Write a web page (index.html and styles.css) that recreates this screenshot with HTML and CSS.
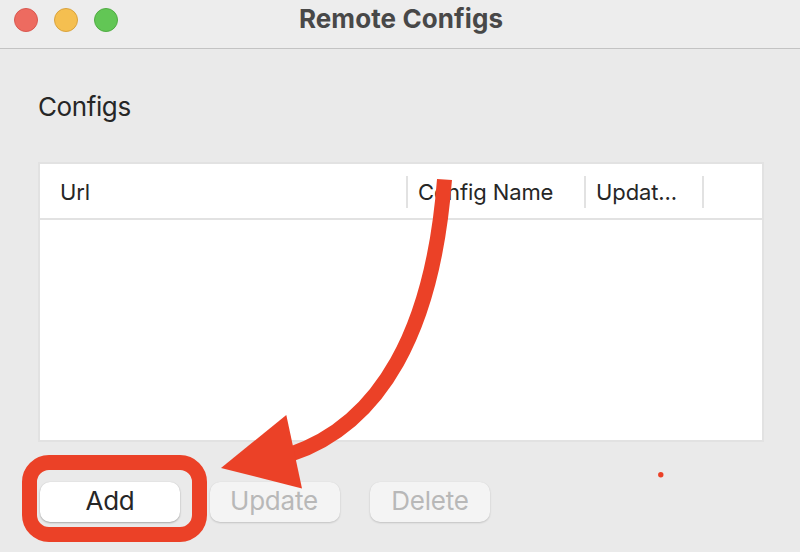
FILE: index.html
```html
<!DOCTYPE html>
<html lang="en">
<head>
<meta charset="utf-8">
<title>Remote Configs</title>
<link rel="stylesheet" href="styles.css">
</head>
<body>
<main class="window">
  <header class="titlebar">
    <div class="lights"><i class="light close"></i><i class="light minimize"></i><i class="light zoom"></i></div>
    <h1><span>Remote Configs</span></h1>
  </header>
  <section class="content">
    <h2><span>Configs</span></h2>
    <div class="table">
      <div class="thead">
        <div class="cell url"><span>Url</span></div>
        <div class="cell name"><span>Config Name</span></div>
        <div class="cell updated"><span>Updat...</span></div>
      </div>
    </div>
    <div class="buttons">
      <button class="add"><span>Add</span></button>
      <button class="update" disabled><span>Update</span></button>
      <button class="delete" disabled><span>Delete</span></button>
    </div>
  </section>
  <svg class="annotation" width="800" height="552" viewBox="0 0 800 552">
    <rect x="29.5" y="462.5" width="170" height="72" rx="19.5" fill="none" stroke="#eb4127" stroke-width="15"/>
    <path d="M444.5 179.5C433 330 381 424 290 454.500" fill="none" stroke="#eb4127" stroke-width="15"/>
    <path d="M221 468L286.300 415L302 488.500Z" fill="#eb4127"/>
    <circle cx="660.800" cy="474.700" r="2.700" fill="#eb4127"/>
  </svg>
</main>
</body>
</html>
```
FILE: styles.css
```css
* { box-sizing: border-box; }
body { margin: 0; font-family: Inter, "Liberation Sans", sans-serif; color: #262626; }
.window { position: relative; width: 800px; height: 552px; overflow: hidden; background: #eaeaea; }
.titlebar { display: grid; grid-template-columns: 118px 1fr 118px; height: 49px; background: #ededed; border-bottom: 1px solid #c3c3c3; }
.lights { display: flex; gap: 16px; padding: 8px 0 0 14px; }
.light { flex: none; width: 24px; height: 24px; border-radius: 50%; border: 1px solid; }
.close { background: #ed6b60; border-color: #d95850; }
.minimize { background: #f5bf50; border-color: #d9a33e; }
.zoom { background: #62c655; border-color: #50ac43; }
h1, h2 { margin: 0; white-space: nowrap; }
h1 { padding: 3px 0 0 2px; font-size: 26px; line-height: 32px; font-weight: 700; text-align: center; color: #484848; letter-spacing: 0.1px; }
.content { padding: 42px 36px 0 38px; }
h2 { font-size: 26px; line-height: 32px; font-weight: 400; letter-spacing: -0.4px; }
.table { margin-top: 39px; height: 280px; width: 726px; background: #fff; border: 2px solid #e2e2e2; }
.thead { display: flex; align-items: flex-start; height: 56px; padding-top: 12px; border-bottom: 2px solid #e2e2e2; }
.cell { height: 32px; border-right: 2px solid #e2e2e2; font-size: 22px; line-height: 32px; white-space: nowrap; letter-spacing: -0.1px; }
.url { width: 368px; padding-left: 20px; }
.name { width: 178px; padding-left: 10px; }
.updated { width: 118px; padding-left: 10px; }
.buttons { display: flex; padding: 40px 0 0 2px; }
button { height: 40px; padding: 0; border: 0; border-radius: 10px; background: #fff; color: #262626; font: 400 26px/38px Inter, "Liberation Sans", sans-serif; letter-spacing: -0.2px; box-shadow: 0 1px 2px rgba(0,0,0,.28), 0 0 1px rgba(0,0,0,.12); }
button span { display: block; height: 40px; }
button:disabled { background: #f4f4f4; color: #b8b8b8; box-shadow: 0 1px 2px rgba(0,0,0,.16), 0 0 1px rgba(0,0,0,.08); }
.add { width: 140px; }
.update { width: 130px; margin-left: 30px; padding-right: 2px; }
.delete { width: 120px; margin-left: 30px; }
.annotation { position: absolute; inset: 0; }
```
